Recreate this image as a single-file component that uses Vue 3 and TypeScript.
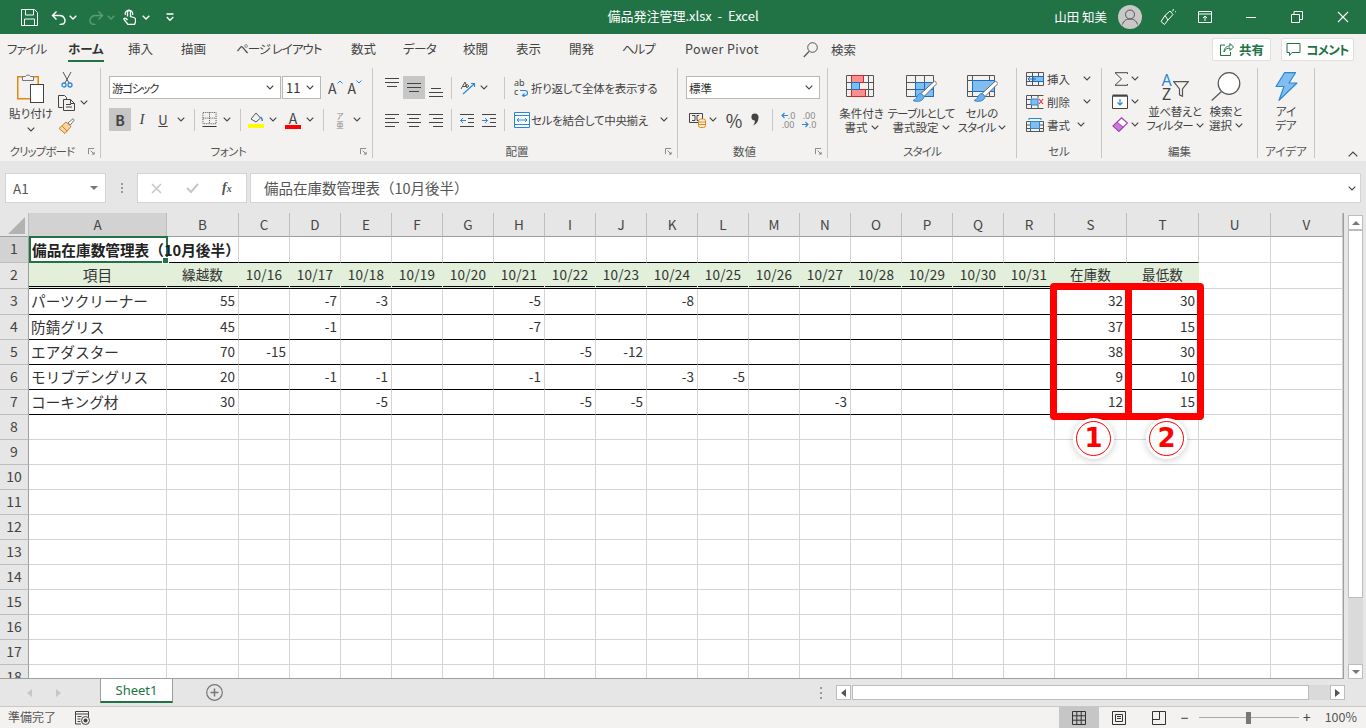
<script setup lang="ts">
const tabs = [
  { t: 'ファイル', w: 61, ls: -1 }, { t: 'ホーム', w: 60, active: true, ls: 0 }, { t: '挿入', w: 53, ls: 0 }, { t: '描画', w: 55, ls: 0 },
  { t: 'ページ レイアウト', w: 115, ls: -1 }, { t: '数式', w: 52, ls: 0 }, { t: 'データ', w: 60, ls: -0.6 }, { t: '校閲', w: 53, ls: 0 },
  { t: '表示', w: 53, ls: 0 }, { t: '開発', w: 53, ls: 0 }, { t: 'ヘルプ', w: 63, ls: -1 }, { t: 'Power Pivot', w: 111, ls: 0.4 },
]
const letters = 'ABCDEFGHIJKLMNOPQRSTUV'.split('')
const days = Array.from({ length: 16 }, (_, i) => `10/${16 + i}`)
type Row = { n: number; kind: string; cells: Record<string, string | number> }
const data: Record<number, Record<string, string | number>> = {
  3: { A: 'パーツクリーナー', B: 55, D: -7, E: -3, H: -5, K: -8, S: 32, T: 30 },
  4: { A: '防錆グリス', B: 45, D: -1, H: -7, S: 37, T: 15 },
  5: { A: 'エアダスター', B: 70, C: -15, I: -5, J: -12, S: 38, T: 30 },
  6: { A: 'モリブデングリス', B: 20, D: -1, E: -1, H: -1, K: -3, L: -5, S: 9, T: 10 },
  7: { A: 'コーキング材', B: 30, E: -5, I: -5, J: -5, N: -3, S: 12, T: 15 },
}
const head: Record<string, string | number> = { A: '項目', B: '繰越数', S: '在庫数', T: '最低数' }
days.forEach((d, i) => { head[letters[2 + i]] = d })
const rows: Row[] = Array.from({ length: 18 }, (_, i) => {
  const n = i + 1
  if (n === 1) return { n, kind: 'first', cells: {} }
  if (n === 2) return { n, kind: 'head', cells: head }
  if (data[n]) return { n, kind: 'body', cells: data[n] }
  return { n, kind: 'empty', cells: {} }
})
function inTable(k: string) { return letters.indexOf(k) <= letters.indexOf('T') }
</script>

<template>
  <div class="app">
    <svg class="defs" aria-hidden="true">
      <symbol id="chev" viewBox="0 0 8 5"><path d="M.7.7 4 4 7.300.7" fill="none" stroke="#444" stroke-width="1.100" /></symbol>
      <symbol id="launch" viewBox="0 0 8 8"><path d="M.5 7V.5H7M3 3l4 4M7 4.500V7H4.500" fill="none" stroke="#777" /></symbol>
      <symbol id="al-l" viewBox="0 0 16 14"><path d="M1 1.500h14M1 5.500h10M1 9.500h14M1 13.500h10" stroke="#444" fill="none" /></symbol>
      <symbol id="al-c" viewBox="0 0 16 14"><path d="M1 1.500h14M3 5.500h10M1 9.500h14M3 13.500h10" stroke="#444" fill="none" /></symbol>
      <symbol id="al-r" viewBox="0 0 16 14"><path d="M1 1.500h14M5 5.500h10M1 9.500h14M5 13.500h10" stroke="#444" fill="none" /></symbol>
      <symbol id="brush" viewBox="0 0 31 27"><path d="M28.500 6 31 8.500 18 21.500 15 18.500z" fill="#fff" stroke="#666" /><path d="M15 18.500c-2.500 0-3.500 2-4.500 4-.7 1.500-2 2.500-3.500 3 3.500 1.500 8 1 10-1.500 1-1.300 1-2.500 1-2.500z" fill="#6fb0e8" stroke="#2b88d8" /></symbol>
    </svg>

    <header class="title">
      <div class="qat">
        <svg class="i-save" viewBox="0 0 17 17"><path d="M.5.5h13l3 3v13H.5zM4.500.5v5.500h8V.5M3.500 16.500v-6.500h10v6.500" fill="none" stroke="#fff" /></svg>
        <svg class="i-undo" viewBox="0 0 16 15"><path d="M1.500 5.500H9a5 5 0 0 1 3.700 8.300L8.500 14.700M5.500 1.500l-4 4 4 4" fill="none" stroke="#fff" stroke-width="1.400" /></svg>
        <svg class="chev-t" viewBox="0 0 8 5"><path d="M.7.7 4 4 7.300.7" fill="none" stroke="#fff" stroke-width="1.400" /></svg>
        <svg class="i-redo" viewBox="0 0 16 15"><path d="M14.500 5.500H7a5 5 0 0 0-3.700 8.300L7.500 14.700M10.500 1.500l4 4-4 4" fill="none" stroke="#5c9a7a" stroke-width="1.400" /></svg>
        <svg class="chev-t c-dim" viewBox="0 0 8 5"><path d="M.7.7 4 4 7.300.7" fill="none" stroke="#5c9a7a" stroke-width="1.400" /></svg>
        <svg class="i-touch" viewBox="0 0 13 16"><path d="M4.500 7.500V3a1.500 1.500 0 0 1 3 0v4.500l3.300 1c1 .3 1.700 1 1.700 2V13l-1 2.500H5L1 10.500c-.5-1 .8-2 2-1l1.500 1.500" fill="none" stroke="#fff" stroke-width="1.300" /><path d="M2.300 6a3.800 3.800 0 1 1 7.300 0" fill="none" stroke="#fff" stroke-width="1.200" /></svg>
        <svg class="chev-t c-touch" viewBox="0 0 8 5"><path d="M.7.7 4 4 7.300.7" fill="none" stroke="#fff" stroke-width="1.400" /></svg>
        <svg class="i-cust" viewBox="0 0 8 9"><path d="M.5 1h7M.7 4 4 7.300 7.300 4" fill="none" stroke="#fff" stroke-width="1.300" /></svg>
      </div>
      <div class="doc">備品発注管理.xlsx&nbsp; -&nbsp; Excel</div>
      <div class="win">
        <span class="user">山田 知美</span>
        <svg class="avatar" viewBox="0 0 24 24"><circle cx="12" cy="12" r="12" fill="#c8c8c8" /><circle cx="12" cy="9.500" r="4.500" fill="none" stroke="#555" /><path d="M4.500 19.500c1-4 4-5.500 7.500-5.500s6.500 1.500 7.500 5.500" fill="none" stroke="#555" /></svg>
        <div class="win-pen"><svg class="i16" viewBox="0 0 16 17"><path d="M5 6.500 10 2l3 3.500-5 5.500-3.500 4.500L1 12.500zM5 6.500l3 4.500M13 1l.5-1M15 3l1-.5M12 2.500l1.500-1.500" fill="none" stroke="#fff" /></svg></div>
        <div class="win-disp"><svg class="i14" viewBox="0 0 14 12"><path d="M.5.500h13v11H.5zM.5 3h13M7 10V5M5 7l2-2 2 2" fill="none" stroke="#fff" /></svg></div>
        <div class="win-btn"><svg class="i12" viewBox="0 0 12 12"><path d="M1 6.500h10" stroke="#fff" /></svg></div>
        <div class="win-btn"><svg class="i12" viewBox="0 0 12 12"><path d="M.5 3.500h8v8h-8zM3 3.500V.5h8.500v8H8.500" fill="none" stroke="#fff" /></svg></div>
        <div class="win-btn"><svg class="i12" viewBox="0 0 12 12"><path d="M1 1l10 10M11 1 1 11" fill="none" stroke="#fff" stroke-width="1.100" /></svg></div>
      </div>
    </header>

    <nav class="tabs">
      <div v-for="t in tabs" :key="t.t" class="tab" :class="{ active: t.active }" :style="{ width: t.w + 'px', letterSpacing: t.ls + 'px' }"><span>{{ t.t }}</span></div>
      <svg class="i-search" viewBox="0 0 15 16"><circle cx="9.500" cy="5.500" r="4.800" fill="none" stroke="#555" /><path d="M6 9.500.8 15" stroke="#555" fill="none" stroke-width="1.200" /></svg>
      <span class="search">検索</span>
      <div class="tabs-right">
        <button class="pill p-share"><svg class="i15" viewBox="0 0 15 15"><path d="M6 3H1.500v10.500h10V10M5 10c0-4 2.500-6 6-6V1.500L14.500 5 11 8.500V6c-3 0-5 1.500-6 4z" fill="none" stroke="#217346" /></svg>共有</button>
        <button class="pill p-comment"><svg class="i15" viewBox="0 0 15 15"><path d="M1 1.500h13v9H6L3.500 13.500v-3H1z" fill="none" stroke="#217346" /></svg>コメント</button>
      </div>
    </nav>

    <section class="ribbon">
      <!-- clipboard -->
      <div class="group g-clip">
        <div class="body row-body">
          <div class="big b-paste">
            <svg class="i-paste" viewBox="0 0 28 31"><rect x=".75" y="4.750" width="20.500" height="22" fill="#f3f2f1" stroke="#e8870e" stroke-width="1.500" /><path d="M5.500 8.500v-4h3a2.800 2.800 0 0 1 5 0h3v4z" fill="#f3f2f1" stroke="#777" /><rect x="13.500" y="12.500" width="13" height="18" fill="#fff" stroke="#444" /></svg>
            <span class="tx">貼り付け</span>
            <svg class="chev chev-line"><use href="#chev" /></svg>
          </div>
          <div class="stack">
            <div class="sr"><svg class="i-cut" viewBox="0 0 12 17"><path d="M2 1l6 11M10 1 4 12" fill="none" stroke="#555" /><circle cx="3" cy="14" r="2" fill="none" stroke="#2b88d8" stroke-width="1.300" /><circle cx="9" cy="14" r="2" fill="none" stroke="#2b88d8" stroke-width="1.300" /></svg></div>
            <div class="sr"><svg class="i-copy" viewBox="0 0 17 16"><path d="M4.500 12.500h-4V.5h6l2 2v2" fill="none" stroke="#444" /><path d="M5.500 4.500h7l4 4v7h-11zM12.500 4.500v4h4M8 9.500h5M8 12h6" fill="#f3f2f1" stroke="#444" /></svg><svg class="chev ml5"><use href="#chev" /></svg></div>
            <div class="sr"><svg class="i-fp" viewBox="0 0 17 16"><path d="M10 5 15 .7 16.300 2l-4 5z" fill="#fff" stroke="#777" /><path d="M1 10.500 8 4l5 4.500-6 7z" fill="#f9d5a7" stroke="#d67f1b" /><path d="M4 8l5 5" stroke="#d67f1b" fill="none" /></svg></div>
          </div>
        </div>
        <div class="label kn8"><span>クリップボード</span><svg class="launch"><use href="#launch" /></svg></div>
      </div>

      <!-- font -->
      <div class="group g-font">
        <div class="body col-body">
          <div class="frow">
            <div class="select w172"><span class="sel-t kn10">游ゴシック</span><svg class="chev"><use href="#chev" /></svg></div>
            <div class="select w39 ml1"><span class="sel-t num">11</span><svg class="chev"><use href="#chev" /></svg></div>
            <div class="letter ml7"><span>A</span><svg class="caret" viewBox="0 0 6 4"><path d="M.5 3.500 3 1l2.500 2.500" fill="none" stroke="#2b88d8" /></svg></div>
            <div class="letter ml5"><span>A</span><svg class="caret" viewBox="0 0 6 4"><path d="M.5.5 3 3 5.500.5" fill="none" stroke="#2b88d8" /></svg></div>
          </div>
          <div class="frow">
            <div class="btn w22 on b">B</div>
            <div class="btn w22 it">I</div>
            <div class="btn w20 un">U</div>
            <div class="btn w16"><svg class="chev"><use href="#chev" /></svg></div>
            <i class="sep ml5 mr6"></i>
            <div class="btn w17"><svg class="i15" viewBox="0 0 15 16"><path d="M.5.500h14v12H.5z" fill="none" stroke="#444" stroke-dasharray="1 1" /><path d="M7.500.5v12M.5 6.500h14" fill="none" stroke="#444" stroke-dasharray="1 1" /><path d="M0 15.500h15" stroke="#222" /></svg></div>
            <div class="btn w18"><svg class="chev"><use href="#chev" /></svg></div>
            <i class="sep ml4 mr6"></i>
            <div class="btn w18"><svg class="i-fill" viewBox="0 0 16 17"><path d="M3 8l5-6 4.500 5-4.500 4z" fill="none" stroke="#555" /><path d="M12.500 6c1.500 1.500 2 3 1.500 4" fill="none" stroke="#2b88d8" stroke-width="1.500" /><rect y="13" width="16" height="4" fill="#ff0" /></svg></div>
            <div class="btn w16"><svg class="chev"><use href="#chev" /></svg></div>
            <div class="btn w18 ml3 colorA"><span>A</span></div>
            <div class="btn w16"><svg class="chev"><use href="#chev" /></svg></div>
            <i class="sep ml5 mr6"></i>
            <div class="btn w20 phon"><span>ア</span><span>亜</span></div>
            <div class="btn w14"><svg class="chev"><use href="#chev" /></svg></div>
          </div>
        </div>
        <div class="label kn5"><span>フォント</span><svg class="launch"><use href="#launch" /></svg></div>
      </div>

      <!-- alignment -->
      <div class="group g-align">
        <div class="body col-body">
          <div class="frow">
            <div class="btn w22 top"><svg class="i-va" viewBox="0 0 14 10"><path d="M0 .5h14M0 4.500h14M2 8.500h10" stroke="#444" fill="none" /></svg></div>
            <div class="btn w22 on"><svg class="i-va" viewBox="0 0 14 10"><path d="M0 .5h14M0 4.500h14M2 8.500h10" stroke="#444" fill="none" /></svg></div>
            <div class="btn w22 bot"><svg class="i-va" viewBox="0 0 14 10"><path d="M2 .5h10M0 4.500h14M0 8.500h14" stroke="#444" fill="none" /></svg></div>
            <i class="sep ml4 mr7"></i>
            <div class="btn w18"><svg class="i-orient" viewBox="0 0 17 14"><path d="M1 8 5 1l2 5M2.500 5.500h4M7 3.500a1.500 1.500 0 1 0 .1 0" fill="none" stroke="#555" /><path d="M3 13 14 3M11 2.500h3.500V6" fill="none" stroke="#2b88d8" stroke-width="1.200" /></svg></div>
            <div class="btn w14"><svg class="chev"><use href="#chev" /></svg></div>
            <i class="sep ml13 mr6"></i>
            <div class="btn w18 lft"><div class="abc"><span>ab</span><span class="abc-c">c</span><svg class="abc-a" viewBox="0 0 9 9"><path d="M2.500 7.500H5a2.500 2.500 0 0 0 0-5H0M4.500 5.500l-2 2 2 1.500" fill="none" stroke="#2b88d8" stroke-width="1.100" /></svg></div></div>
            <span class="tx wrap">折り返して全体を表示する</span>
          </div>
          <div class="frow">
            <div class="btn w22"><svg class="i-al"><use href="#al-l" /></svg></div>
            <div class="btn w22"><svg class="i-al"><use href="#al-c" /></svg></div>
            <div class="btn w22"><svg class="i-al"><use href="#al-r" /></svg></div>
            <i class="sep ml4 mr4"></i>
            <div class="btn w22"><svg class="i-al" viewBox="0 0 16 14"><path d="M1 1.500h14M9 5.500h6M9 9.500h6M1 13.500h14" stroke="#444" fill="none" /><path d="M7 7.500H1.500M4 5 1.500 7.500 4 10" stroke="#2b88d8" fill="none" /></svg></div>
            <div class="btn w22"><svg class="i-al" viewBox="0 0 16 14"><path d="M1 1.500h14M9 5.500h6M9 9.500h6M1 13.500h14" stroke="#444" fill="none" /><path d="M1 7.500h5.500M4 5l2.500 2.500L4 10" stroke="#2b88d8" fill="none" /></svg></div>
            <i class="sep ml4 mr6"></i>
            <div class="btn w18 lft"><svg class="i-merge" viewBox="0 0 16 16"><path d="M.5.5h15v15H.5z" fill="#fff" stroke="#2b88d8" /><path d="M.5 3.500h15M.5 12.500h15" stroke="#2b88d8" fill="none" /><path d="M3 8h10M5 6 3 8l2 2M11 6l2 2-2 2" stroke="#2b88d8" fill="none" /></svg></div>
            <span class="tx wrap merge">セルを結合して中央揃え</span>
            <svg class="chev"><use href="#chev" /></svg>
          </div>
        </div>
        <div class="label"><span>配置</span><svg class="launch"><use href="#launch" /></svg></div>
      </div>

      <!-- number -->
      <div class="group g-num">
        <div class="body col-body">
          <div class="frow">
            <div class="select w134"><span class="sel-t">標準</span><svg class="chev"><use href="#chev" /></svg></div>
          </div>
          <div class="frow">
            <div class="btn w18 ml2"><svg class="i-cur" viewBox="0 0 17 16"><path d="M.5 1.500h13v9H.5z" fill="none" stroke="#444" /><path d="M3 3.500h3v5H3M10 3.500H8v5h2" fill="none" stroke="#444" /><rect x="9.500" y="7" width="7" height="8.500" rx="2" fill="#f3f2f1" stroke="#e8870e" /><path d="M10 10h6M10 12.500h6" stroke="#e8870e" /></svg></div>
            <div class="btn w14"><svg class="chev"><use href="#chev" /></svg></div>
            <div class="btn w24 ml2 pct">%</div>
            <div class="btn w18"><svg class="i-comma" viewBox="0 0 8 13"><path d="M4 .5a3.500 3.500 0 0 1 3.500 4c0 4-2 6.500-5.500 8 1.500-2 2-3.500 1.800-5A3.300 3.300 0 0 1 4 .5z" fill="#444" /></svg></div>
            <i class="sep ml8 mr5"></i>
            <div class="btn w20 dec">
              <div class="dec-r"><svg class="dec-a" viewBox="0 0 7 7"><path d="M7 3.500H1M3.500 1 1 3.500 3.500 6" stroke="#2b88d8" fill="none" stroke-width="1.100" /></svg><span>.0</span></div>
              <div class="dec-r"><span>.00</span></div>
            </div>
            <div class="btn w22 dec">
              <div class="dec-r"><span>.00</span></div>
              <div class="dec-r"><svg class="dec-a" viewBox="0 0 7 7"><path d="M0 3.500h6M3.500 1 6 3.500 3.500 6" stroke="#2b88d8" fill="none" stroke-width="1.100" /></svg><span>.0</span></div>
            </div>
          </div>
        </div>
        <div class="label"><span>数値</span><svg class="launch"><use href="#launch" /></svg></div>
      </div>

      <!-- styles -->
      <div class="group g-style">
        <div class="body row-body pl4">
          <div class="big b-cond">
            <svg class="i-style" viewBox="0 0 31 27"><path d="M.5.500h27v21H.5zM.5 7.500h27M.5 14.500h27M5.500.5v21M13.500.5v21M22.500.5v21" fill="none" stroke="#555" /><path d="M5.500.500h12v7h-12zM5.500 14.500h14v7h-14z" fill="#f88f92" stroke="#d22" /><path d="M5.500 7.500h8v7h-8z" fill="#82bdf0" stroke="#1a6fc4" /></svg>
            <span class="tx">条件付き</span><span class="tx">書式 <svg class="chev"><use href="#chev" /></svg></span>
          </div>
          <div class="big b-table">
            <svg class="i-style" viewBox="0 0 31 27"><path d="M.5.500h27v21H.5zM.5 7.500h27M.5 14.500h27M9.500.5v21M18.500.5v21" fill="none" stroke="#555" /><path d="M9.500 7.500h18v14h-18z" fill="#82bdf0" stroke="#1a6fc4" /><path d="M18.500 7.500v14M9.500 14.500h18" stroke="#1a6fc4" fill="none" /><use href="#brush" x="0" y="0" width="31" height="27" /></svg>
            <span class="tx kn7">テーブルとして</span><span class="tx">書式設定 <svg class="chev"><use href="#chev" /></svg></span>
          </div>
          <div class="big b-cell">
            <svg class="i-style" viewBox="0 0 31 27"><path d="M.5.500h27v21H.5zM.5 5.500h27M.5 16.500h27M5.500.5v21M22.500.5v21" fill="none" stroke="#555" /><path d="M5.500 5.500h22v11h-22z" fill="#82bdf0" stroke="#1a6fc4" /><use href="#brush" x="0" y="0" width="31" height="27" /></svg>
            <span class="tx">セルの</span><span class="tx kn8">スタイル <svg class="chev"><use href="#chev" /></svg></span>
          </div>
        </div>
        <div class="label lab-plain kn8"><span>スタイル</span></div>
      </div>

      <!-- cells -->
      <div class="group g-cells">
        <div class="body">
          <div class="stack pl9 up1">
            <div class="sr"><svg class="i-cellop" viewBox="0 0 18 14"><path d="M.5.5h17v13H.5zM.5 4.500h17M.5 9.500h17M6.500.5v13M12.500.5v13" fill="none" stroke="#555" /><path d="M7 4.500h10.500v5H7z" fill="#82bdf0" stroke="#1a6fc4" /><path d="M10 7H2M5 4 2 7l3 3" fill="none" stroke="#1a6fc4" /></svg><span class="tx cell-t">挿入</span><svg class="chev"><use href="#chev" /></svg></div>
            <div class="sr"><svg class="i-cellop" viewBox="0 0 18 14"><path d="M.5.5h17M.5 13.500h17M.5 4.500h5M.5 9.500h5M.5.5v13M5.500.5v3M5.500 10v3M12 .5v3M12 10v3" fill="none" stroke="#555" /><path d="M5 4h7v6H5z" fill="#82bdf0" stroke="#2b88d8" /><path d="M13 4l4 5M17 4l-4 5" stroke="#e33" fill="none" stroke-width="1.200" /></svg><span class="tx cell-t">削除</span><svg class="chev"><use href="#chev" /></svg></div>
            <div class="sr"><svg class="i-cellop" viewBox="0 0 18 14"><path d="M.5 3.500h17v10H.5zM.5 7h17M.5 10.500h17M4.500 3.500v10M13.500 3.500v10" fill="none" stroke="#555" /><path d="M4.500 3.500h9v7h-9z" fill="#82bdf0" stroke="#2b88d8" /><path d="M3 .5h12M3 0v2M15 0v2" stroke="#2b88d8" fill="none" /></svg><span class="tx cell-t short">書式</span><svg class="chev"><use href="#chev" /></svg></div>
          </div>
        </div>
        <div class="label lab-plain"><span>セル</span></div>
      </div>

      <!-- editing -->
      <div class="group g-edit">
        <div class="body row-body">
          <div class="stack pl10 up1">
            <div class="sr"><svg class="i-sum" viewBox="0 0 14 14"><path d="M13.500 2V.7H1L7.500 7 1 13.300h12.500V12" fill="none" stroke="#444" /></svg><svg class="chev"><use href="#chev" /></svg></div>
            <div class="sr"><svg class="i-fill2" viewBox="0 0 16 15"><path d="M.5 2h15v12.500H.5z" fill="#fff" stroke="#444" /><path d="M.5.5h15v2H.5z" fill="#444" /><path d="M8 5v6M5.500 8.500 8 11l2.500-2.500" fill="none" stroke="#2b88d8" stroke-width="1.200" /></svg><svg class="chev"><use href="#chev" /></svg></div>
            <div class="sr"><svg class="i-fill2" viewBox="0 0 16 15"><path d="M9.500.8 15.500 6 7 14.300 1 9z" fill="#fff" stroke="#a23fb4" stroke-width="1.200" /><path d="M5 5 1 9l6 5.300L11 10z" fill="#c779d4" stroke="#a23fb4" /></svg><svg class="chev"><use href="#chev" /></svg></div>
          </div>
          <div class="big b-sort">
            <div class="sort-i">
              <div class="az"><b>A</b><span>Z</span></div>
              <svg class="i-funnel" viewBox="0 0 16 16"><path d="M.7.7h14.600L9.500 8v7.300l-3-1.500V8z" fill="none" stroke="#555" stroke-width="1.200" /></svg>
            </div>
            <span class="tx kn4">並べ替えと</span><span class="tx kn7">フィルター <svg class="chev"><use href="#chev" /></svg></span>
          </div>
          <div class="big b-find">
            <svg class="i-find" viewBox="0 0 30 29"><circle cx="18" cy="11.500" r="10.800" fill="#fff" stroke="#555" stroke-width="1.200" /><path d="M10.500 19.500.7 28.500" stroke="#555" stroke-width="1.200" fill="none" /></svg>
            <span class="tx">検索と</span><span class="tx">選択 <svg class="chev"><use href="#chev" /></svg></span>
          </div>
        </div>
        <div class="label lab-plain"><span>編集</span></div>
      </div>

      <!-- ideas -->
      <div class="group g-idea">
        <div class="body row-body">
          <div class="big b-idea">
            <svg class="i-bolt" viewBox="0 0 23 29"><path d="M9.500.7h11L14 11h8L4 28.300 9 14.500H1z" fill="#82bdf0" stroke="#2b88d8" stroke-width="1.200" stroke-linejoin="round" /></svg>
            <span class="tx">アイ</span><span class="tx">デア</span>
          </div>
        </div>
        <div class="label lab-plain"><span>アイデア</span></div>
      </div>
      <div class="collapse"><svg class="chev-up" viewBox="0 0 10 6"><path d="M.7 5.300 5 1l4.300 4.300" fill="none" stroke="#444" stroke-width="1.200" /></svg></div>
    </section>

    <section class="fbar">
      <div class="namebox"><span>A1</span><svg class="tri" viewBox="0 0 8 4"><path d="M0 0h8L4 4z" fill="#777" /></svg></div>
      <div class="fdots"><i></i><i></i><i></i></div>
      <div class="fxbox">
        <svg class="i-x" viewBox="0 0 11 11"><path d="M1 1l9 9M10 1l-9 9" stroke="#c6c6c6" stroke-width="1.500" fill="none" /></svg>
        <svg class="i-check" viewBox="0 0 13 10"><path d="M1 5l4 4 7-8" stroke="#c6c6c6" stroke-width="2" fill="none" /></svg>
        <span class="fx"><em>f</em><em class="x">x</em></span>
      </div>
      <div class="finput"><span>備品在庫数管理表（10月後半）</span><svg class="chev"><use href="#chev" /></svg></div>
    </section>

    <section class="sheetwrap">
      <div class="sheet">
        <div class="gr hdr">
          <div class="corner"><svg class="corner-t" viewBox="0 0 17 17"><path d="M17 0v17H0z" fill="#b2b2b2" /></svg></div>
          <div v-for="c in letters" :key="c" class="ch" :class="{ sel: c === 'A' }">{{ c }}</div>
        </div>
        <div v-for="r in rows" :key="r.n" class="gr rw" :class="'k-' + r.kind + ' n-' + r.n">
          <div class="rh" :class="{ sel: r.n === 1 }">{{ r.n }}</div>
          <div
            v-for="c in letters"
            :key="c"
            class="cell"
            :class="[
              inTable(c) ? 'in' : 'out',
              c === 'A' ? 'ca' : typeof r.cells[c] === 'number' ? 'num' : '',
            ]"
          >{{ r.n === 1 && c === 'A' ? '' : r.cells[c] }}<template v-if="r.n === 1 && c === 'A'"><span class="sel-box"><b class="ttl">備品在庫数管理表（10月後半）</b><i class="handle"></i></span></template></div>
        </div>

        <div class="red r1"></div>
        <div class="red r2"></div>
        <div class="mark m1">1</div>
        <div class="mark m2">2</div>
      </div>
      <aside class="vscroll">
        <div class="sb-btn"><svg class="tri" viewBox="0 0 8 4"><path d="M0 4h8L4 0z" fill="#777" /></svg></div>
        <div class="vthumb"></div>
        <div class="vtrack"></div>
        <div class="sb-btn"><svg class="tri" viewBox="0 0 8 4"><path d="M0 0h8L4 4z" fill="#777" /></svg></div>
      </aside>
    </section>

    <section class="sheetbar">
      <div class="nav">
        <svg class="arr" viewBox="0 0 5 8"><path d="M5 0v8L0 4z" fill="#c6c6c6" /></svg>
        <svg class="arr" viewBox="0 0 5 8"><path d="M0 0v8l5-4z" fill="#c6c6c6" /></svg>
      </div>
      <div class="stab">Sheet1</div>
      <svg class="plus" viewBox="0 0 17 17"><circle cx="8.500" cy="8.500" r="7.800" fill="none" stroke="#777" stroke-width="1.200" /><path d="M8.500 4.500v8M4.500 8.500h8" stroke="#777" stroke-width="1.500" /></svg>
      <div class="grow"></div>
      <div class="dots"><i></i><i></i><i></i></div>
      <div class="hscroll">
        <div class="hbtn"><svg class="arr dark" viewBox="0 0 5 8"><path d="M5 0v8L0 4z" fill="#555" /></svg></div>
        <div class="hthumb"></div>
        <div class="htrack"></div>
        <div class="hbtn"><svg class="arr dark" viewBox="0 0 5 8"><path d="M0 0v8l5-4z" fill="#555" /></svg></div>
      </div>
    </section>

    <footer class="status">
      <span class="ready">準備完了</span>
      <svg class="i-macro" viewBox="0 0 15 14"><path d="M6 13H.5V.5h13V6M.5 3h13M2.500 5.500h4M2.500 8h3M2.500 10.500h3" fill="none" stroke="#444" /><circle cx="10.500" cy="9.500" r="4" fill="none" stroke="#444" /><circle cx="10.500" cy="9.500" r="2" fill="#444" /></svg>
      <div class="grow"></div>
      <div class="view on"><svg class="i14" viewBox="0 0 14 14"><path d="M.5.5h13v13H.5zM4.800.5v13M9.200.5v13M.5 4.800h13M.5 9.200h13" fill="none" stroke="#333" /></svg></div>
      <div class="view"><svg class="i14" viewBox="0 0 14 14"><path d="M.5.5h13v13H.5zM3.500 3.500h7v7h-7zM5 5.500h4M5 7.500h4" fill="none" stroke="#333" /></svg></div>
      <div class="view"><svg class="i14" viewBox="0 0 14 14"><path d="M.5.5h13v13H.5zM.5 8.500h7V.5" fill="none" stroke="#333" /></svg></div>
      <span class="zm">−</span>
      <div class="slider"><i class="thumb"></i></div>
      <span class="zm zm-p">+</span>
      <span class="pctz">100%</span>
    </footer>
  </div>
</template>

<style>
html, body { margin: 0; padding: 0; background: #fff; overflow: hidden; }
</style>

<style scoped>
.app { width: 1366px; height: 728px; display: flex; flex-direction: column; overflow: hidden; background: #f3f2f1; color: #444; font-family: "Noto Sans CJK JP", "Noto Sans", sans-serif; font-size: 12px; font-feature-settings: "palt"; }
.defs { width: 0; height: 0; position: absolute; }
svg { display: block; flex: none; }
.title { height: 34px; flex: none; background: #217346; color: #fff; display: grid; grid-template-columns: 1fr auto 1fr; align-items: center; }
.qat { display: flex; align-items: center; padding-left: 21px; }
.i-save { width: 17px; height: 17px; }
.i-undo { width: 16px; height: 15px; margin-left: 13px; }
.chev-t { width: 8px; height: 5px; margin-left: 2px; }
.i-redo { width: 16px; height: 15px; margin-left: 11px; }
.c-dim { margin-left: 3px; }
.i-touch { width: 13px; height: 16px; margin-left: 8px; }
.c-touch { margin-left: 6px; }
.i-cust { width: 8px; height: 9px; margin-left: 16px; }
.doc { font-size: 13px; white-space: nowrap; padding-bottom: 3px; }
.win { display: flex; align-items: center; justify-content: flex-end; height: 34px; }
.user { font-size: 12.500px; margin-right: 11px; white-space: nowrap; padding-bottom: 1px; }
.avatar { width: 24px; height: 24px; }
.win-pen { width: 52px; display: flex; justify-content: center; }
.win-disp { width: 22px; margin-right: 12px; display: flex; justify-content: center; }
.win-btn { width: 46px; display: flex; justify-content: center; }
.i16 { width: 16px; height: 17px; }
.i14 { width: 14px; height: 14px; }
.win-disp .i14 { height: 12px; }
.i12 { width: 12px; height: 12px; }
.i15 { width: 15px; height: 15px; }

.tabs { height: 33px; flex: none; display: flex; align-items: center; padding-left: 7px; }
.tab { height: 33px; flex: none; font-size: 12.500px; white-space: nowrap; color: #444; }
.tab span { display: inline-block; height: 25px; line-height: 28px; margin-top: 1px; border-bottom: 2px solid transparent; }
.tab.active span { font-weight: 700; color: #333; border-bottom-color: #217346; }
.i-search { width: 15px; height: 16px; margin: 0 0 2px 7px; }
.search { margin: 0 0 3px 13px; font-size: 12.500px; }
.tabs-right { margin-left: auto; margin-right: 12px; display: flex; gap: 10px; align-self: flex-start; margin-top: 4px; }
.pill { height: 23px; padding: 0; display: flex; align-items: center; justify-content: center; gap: 5px; background: #fff; border: 1px solid #e1dfdd; border-radius: 2px; font: inherit; font-weight: 700; font-size: 12.500px; color: #217346; font-feature-settings: "palt"; box-sizing: border-box; }
.p-share { width: 59px; }
.p-comment { width: 73px; letter-spacing: -.7px; }

.ribbon { height: 94px; flex: none; display: flex; padding-bottom: 4px; box-sizing: border-box; }
.group { flex: none; height: 90px; display: flex; flex-direction: column; border-right: 1px solid #c8c6c4; box-sizing: border-box; margin-top: 1px; }
.g-clip { width: 101px; }
.g-font { width: 272px; }
.g-align { width: 305px; }
.g-num { width: 150px; }
.g-style { width: 189px; }
.g-cells { width: 85px; }
.g-edit { width: 156px; }
.g-idea { width: 57px; }
.collapse { flex: 1; display: flex; justify-content: flex-end; align-items: flex-end; padding: 0 8px 0 0; }
.chev-up { width: 10px; height: 6px; }
.body { height: 77px; flex: none; }
.row-body { display: flex; }
.col-body { display: flex; flex-direction: column; gap: 9px; padding: 8px 0 0 8px; box-sizing: border-box; }
.label { height: 13px; display: flex; align-items: center; font-size: 11.500px; color: #555; line-height: 13px; }
.label span { flex: 1; text-align: center; white-space: nowrap; }
.launch { width: 7px; height: 7px; margin: 0 5px 0 4px; }
.kn4 { letter-spacing: -.4px; }
.kn5 { letter-spacing: -.5px; }
.kn7 { letter-spacing: -.7px; }
.kn8 { letter-spacing: -.9px; }
.kn10 { letter-spacing: -1.200px; }
.tx { font-size: 11.500px; line-height: 14px; white-space: nowrap; color: #444; display: inline-flex; align-items: center; gap: 3px; }
.chev { width: 8px; height: 5px; }
.ml1 { margin-left: 1px; } .ml2 { margin-left: 2px; } .ml3 { margin-left: 3px; } .ml4 { margin-left: 4px; } .ml5 { margin-left: 5px; } .ml7 { margin-left: 7px; } .ml8 { margin-left: 8px; } .ml13 { margin-left: 13px; }
.mr4 { margin-right: 4px; } .mr5 { margin-right: 5px; } .mr6 { margin-right: 6px; } .mr7 { margin-right: 7px; }
.pl4 { padding-left: 4px; } .pl9 { padding-left: 9px; } .pl10 { padding-left: 10px; }
.up1 { margin-top: -1px; }
.big { display: flex; flex-direction: column; align-items: center; flex: none; }
.b-paste { width: 54px; margin-left: 4px; padding-top: 4px; }
.i-paste { width: 28px; height: 31px; margin-bottom: 3px; }
.chev-line { margin-top: 7px; }
.stack { display: flex; flex-direction: column; box-sizing: border-box; }
.sr { height: 23px; display: flex; align-items: center; }
.i-cut { width: 12px; height: 17px; margin-left: 3px; }
.i-copy { width: 17px; height: 16px; }
.i-fp { width: 17px; height: 16px; }
.frow { display: flex; align-items: center; height: 23px; }
.select { height: 23px; box-sizing: border-box; background: #fff; border: 1px solid #b8b8b8; display: flex; align-items: center; justify-content: space-between; padding: 0 6px 0 2px; }
.w172 { width: 172px; } .w39 { width: 39px; } .w134 { width: 134px; }
.sel-t { font-size: 11.500px; color: #333; }
.sel-t.num { font-size: 13px; padding-left: 1px; }
.letter { display: flex; align-items: flex-start; font-size: 14px; height: 20px; line-height: 20px; }
.caret { width: 6px; height: 4px; margin-top: 2px; }
.btn { height: 23px; display: flex; align-items: center; justify-content: center; flex: none; font-size: 13px; color: #444; }
.btn.on { background: #c6c6c6; }
.w14 { width: 14px; } .w16 { width: 16px; } .w17 { width: 17px; } .w18 { width: 18px; } .w20 { width: 20px; } .w22 { width: 22px; } .w24 { width: 24px; }
.b { font-weight: 700; font-size: 14px; }
.it { font-style: italic; font-family: "Liberation Serif", serif; font-size: 15px; }
.un { text-decoration: underline; font-size: 13px; }
.sep { width: 1px; height: 22px; background: #c8c6c4; flex: none; display: block; }
.i-fill { width: 16px; height: 17px; }
.colorA { flex-direction: column; font-size: 14px; line-height: 14px; }
.colorA span { border-bottom: 4px solid #f00; width: 16px; text-align: center; }
.phon { flex-direction: column; font-size: 7.500px; line-height: 9px; color: #888; }
.i-va { width: 14px; height: 10px; }
.top { align-items: flex-start; padding-top: 2px; box-sizing: border-box; }
.bot { align-items: flex-end; padding-bottom: 1px; box-sizing: border-box; }
.i-orient { width: 17px; height: 14px; }
.lft { justify-content: flex-start; padding-left: 3px; box-sizing: border-box; }
.abc { width: 15px; height: 17px; display: flex; flex-wrap: wrap; font-family: "Noto Sans", sans-serif; font-size: 9px; line-height: 8.500px; color: #444; }
.abc span { display: block; flex: none; }
.abc > span:first-child { width: 15px; }
.abc-c { width: 6px; }
.abc-a { width: 9px; height: 9px; }
.wrap { margin-left: 2px; font-size: 11.500px; letter-spacing: -.3px; }
.merge { margin-right: 12px; }
.i-al { width: 16px; height: 14px; }
.i-merge { width: 16px; height: 16px; }
.i-cur { width: 17px; height: 16px; }
.pct { font-size: 18px; }
.i-comma { width: 8px; height: 13px; }
.dec { flex-direction: column; align-items: center; font-family: "Noto Sans", sans-serif; font-size: 9px; line-height: 9px; color: #888; }
.dec-r { display: flex; align-items: center; height: 9px; }
.dec-a { width: 7px; height: 7px; }
.b-cond { width: 59px; padding-top: 7px; }
.b-table { width: 60px; padding-top: 7px; }
.b-cell { width: 62px; padding-top: 7px; }
.i-style { width: 31px; height: 27px; margin-bottom: 4px; }
.i-cellop { width: 18px; height: 14px; }
.cell-t { margin: 0 0 0 3px; width: 36px; }
.cell-t.short { width: 30px; }
.i-sum { width: 14px; height: 14px; margin: 0 3px 0 2px; }
.i-fill2 { width: 16px; height: 15px; margin-right: 3px; }
.b-sort { width: 60px; margin-left: 6px; padding-top: 4px; }
.sort-i { height: 30px; display: flex; align-items: center; justify-content: center; gap: 1px; margin-bottom: 2px; }
.az { display: flex; flex-direction: column; align-items: center; font-size: 16px; line-height: 14.500px; font-family: "Noto Sans", sans-serif; }
.az b { color: #2b88d8; font-weight: 400; }
.i-funnel { width: 16px; height: 16px; margin-top: 3px; }
.b-find { width: 42px; padding-top: 4px; }
.i-find { width: 30px; height: 29px; margin-bottom: 3px; }
.b-idea { width: 56px; padding-top: 4px; }
.i-bolt { width: 23px; height: 29px; margin-bottom: 3px; }

.fbar { height: 52px; flex: none; background: #e6e6e6; display: flex; align-items: flex-start; padding: 12px 5px 0; box-sizing: border-box; }
.namebox, .fxbox, .finput { height: 30px; box-sizing: border-box; background: #fff; border: 1px solid #d4d4d4; display: flex; align-items: center; }
.namebox { width: 101px; padding: 0 7px; justify-content: space-between; font-size: 13.500px; color: #555; }
.tri { width: 8px; height: 4px; }
.fdots { width: 31px; height: 30px; display: flex; flex-direction: column; align-items: center; justify-content: center; gap: 2px; }
.fdots i, .dots i { width: 2px; height: 2px; background: #999; display: block; }
.fxbox { width: 110px; padding-left: 13px; }
.i-x { width: 11px; height: 11px; }
.i-check { width: 13px; height: 10px; margin-left: 24px; }
.fx { margin-left: 23px; font-family: "Liberation Serif", serif; font-size: 14px; color: #555; font-weight: 700; }
.fx em { font-style: italic; }
.fx .x { font-size: 10px; }
.finput { flex: 1; margin-left: 3px; padding: 0 4px 0 13px; justify-content: space-between; font-size: 14.500px; color: #555; font-feature-settings: normal; }
.finput span { padding-bottom: 2px; }

.sheetwrap { height: 466px; flex: none; display: flex; background: #e6e6e6; }
.sheet { width: 1344px; height: 466px; overflow: hidden; position: relative; background: #fff; border-right: 1px solid #9e9e9e; border-bottom: 1px solid #9e9e9e; box-sizing: border-box; flex: none; font-feature-settings: normal; }
.gr { display: grid; grid-template-columns: 29px 138px 72px repeat(16, 51px) 72px 72px 72px 72px; }
.hdr { height: 24px; background: #e6e6e6; }
.corner { border-right: 1px solid #bdbdbd; border-bottom: 1px solid #9e9e9e; display: flex; align-items: flex-end; justify-content: flex-end; padding: 0 3px 2px 0; box-sizing: border-box; }
.corner-t { width: 17px; height: 17px; }
.ch { border-right: 1px solid #bdbdbd; border-bottom: 1px solid #9e9e9e; text-align: center; line-height: 23px; font-size: 13.500px; color: #444; box-sizing: border-box; }
.ch.sel { background: #d2d2d2; border-bottom-color: #777; }
.rw { height: 25px; }
.n-1, .n-2, .n-3 { height: 26px; }
.rh { background: #e6e6e6; border-right: 1px solid #9e9e9e; border-bottom: 1px solid #bdbdbd; text-align: center; font-size: 14px; line-height: 23px; color: #444; box-sizing: border-box; }
.rh.sel { background: #d2d2d2; }
.cell { box-sizing: border-box; border-right: 1px solid #d4d4d4; border-bottom: 1px solid #d4d4d4; font-size: 14.670px; line-height: 23px; color: #333; white-space: nowrap; padding: 0 3px; }
.cell.ca { padding-left: 2px; }
.cell.num { text-align: right; font-size: 13.500px; }
.k-body .cell.in { border-bottom-color: #000; }
.k-first .cell.in { border-bottom-color: #000; }
.k-head .cell.in { background: #e2efda; border-right-color: transparent; border-bottom: 3px double #000; text-align: center; font-size: 13.500px; letter-spacing: .2px; padding: 0; }
.k-head .cell.ca { font-size: 14.670px; }
.k-first .ca { padding: 0; position: relative; border-right-color: transparent; }
.sel-box { position: absolute; left: 0; top: -1px; width: 139px; height: 27px; box-sizing: border-box; border: 2px solid #217346; z-index: 3; }
.ttl { position: absolute; left: 1px; top: 0; font-weight: 700; font-size: 14.670px; line-height: 23px; color: #222; }
.handle { position: absolute; right: -3px; bottom: -3px; width: 5px; height: 5px; background: #217346; border: 1px solid #fff; box-sizing: content-box; }
.red { position: absolute; top: 70px; height: 137px; box-sizing: border-box; border: 7px solid #f00; border-radius: 4px; z-index: 4; }
.r1 { left: 1050px; width: 82px; }
.r2 { left: 1125px; width: 79px; }
.mark { position: absolute; top: 208px; width: 35px; height: 35px; box-sizing: border-box; border: 1.500px solid #f00; border-radius: 50%; background: rgba(255, 255, 255, .65); box-shadow: 0 0 0 3px #fff, 0 1px 6px 4px rgba(0, 0, 0, .16); color: #f00; font-family: "DejaVu Sans", sans-serif; font-weight: 700; font-size: 26px; line-height: 32px; text-align: center; z-index: 4; text-shadow: 0 0 2px #fff; }
.m1 { left: 1076px; }
.m2 { left: 1149px; }
.vscroll { width: 15px; margin-left: 4px; padding-top: 2px; display: flex; flex-direction: column; box-sizing: content-box; height: 464px; }
.sb-btn { height: 15px; flex: none; background: #fff; border: 1px solid #bdbdbd; box-sizing: border-box; display: flex; align-items: center; justify-content: center; }
.vthumb { height: 368px; flex: none; background: #fff; border: 1px solid #bdbdbd; box-sizing: border-box; }
.vtrack { flex: 1; background: #dadada; }

.sheetbar { height: 28px; flex: none; background: #e6e6e6; border-bottom: 1px solid #c8c8c8; box-sizing: border-box; display: flex; align-items: center; }
.nav { width: 100px; display: flex; padding-left: 27px; gap: 24px; box-sizing: border-box; }
.arr { width: 5px; height: 8px; }
.stab { width: 73px; height: 25px; box-sizing: border-box; background: #fff; border-left: 1px solid #9e9e9e; border-right: 1px solid #9e9e9e; border-bottom: 2px solid #217346; color: #217346; font-size: 13px; text-align: center; line-height: 24px; font-family: "Noto Sans", sans-serif; align-self: flex-start; margin-top: -1px; }
.plus { width: 17px; height: 17px; margin-left: 33px; }
.grow { flex: 1; }
.dots { display: flex; flex-direction: column; gap: 3px; margin-right: 14px; }
.hscroll { width: 509px; height: 15px; margin-right: 21px; display: flex; }
.hbtn { width: 15px; flex: none; background: #fff; border: 1px solid #bdbdbd; box-sizing: border-box; display: flex; align-items: center; justify-content: center; }
.hthumb { width: 457px; flex: none; background: #fff; border: 1px solid #bdbdbd; box-sizing: border-box; margin-left: 1px; }
.htrack { flex: 1; background: #dadada; }

.status { height: 21px; flex: none; display: flex; align-items: center; background: #f3f2f1; font-size: 12px; }
.ready { margin-left: 8px; color: #555; padding-bottom: 2px; }
.i-macro { width: 15px; height: 14px; margin-left: 19px; }
.view { width: 40px; height: 21px; display: flex; align-items: center; justify-content: center; }
.view.on { background: #c6c6c6; }
.zm { width: 12px; text-align: center; font-size: 14px; color: #444; line-height: 21px; font-family: "Noto Sans", sans-serif; }
.zm-p { margin-left: 2px; }
.slider { width: 100px; height: 1px; background: #aaa; margin-left: 8px; display: flex; justify-content: center; align-items: center; }
.thumb { width: 5px; height: 12px; background: #777; display: block; flex: none; }
.pctz { margin: 0 9px 0 12px; font-size: 12.500px; color: #555; padding-bottom: 2px; }
</style>
